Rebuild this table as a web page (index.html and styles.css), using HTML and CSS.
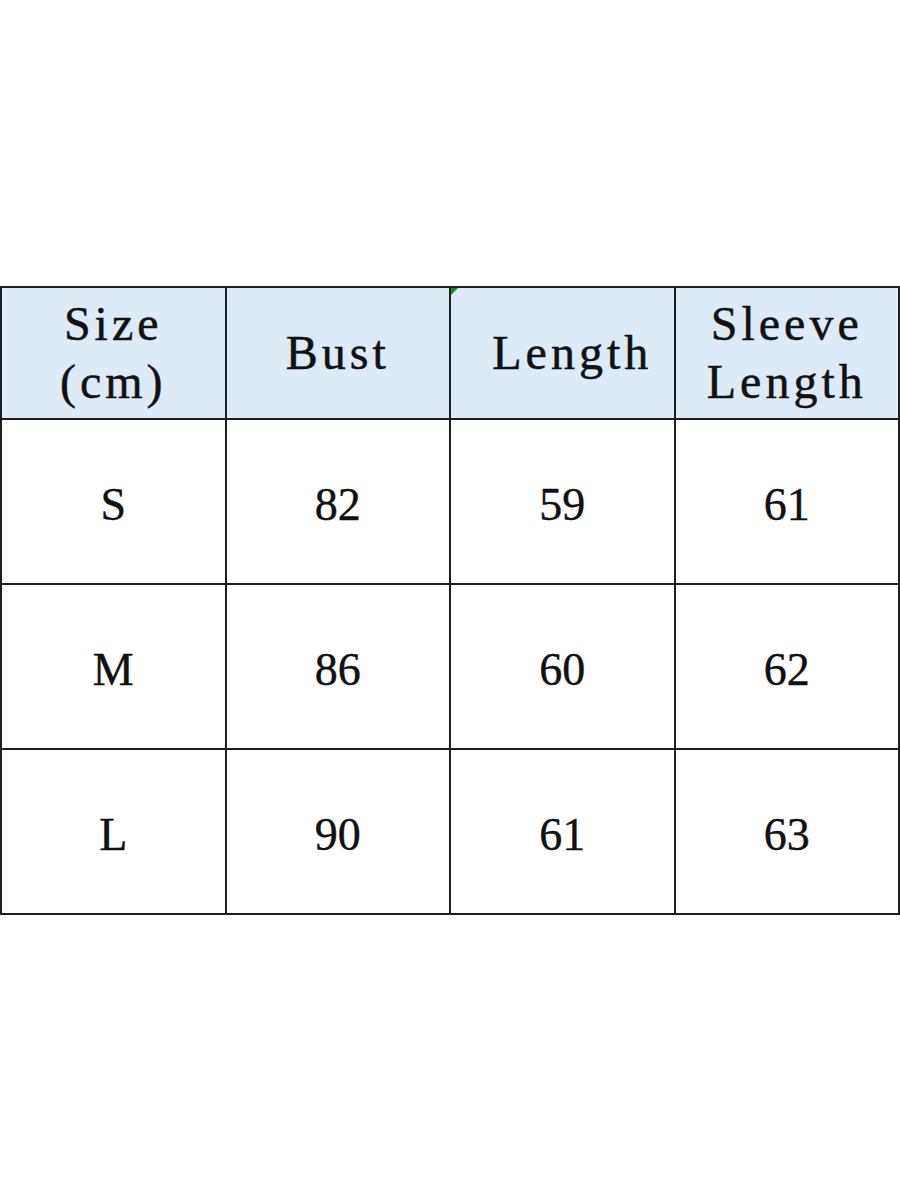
FILE: index.html
```html
<!DOCTYPE html>
<html lang="en">
<head>
<meta charset="utf-8">
<title>Size chart</title>
<link rel="stylesheet" href="styles.css">
</head>
<body>
<main class="page">
  <table class="chart">
    <thead>
      <tr class="head-row">
        <th class="head-cell">Size<br>(cm)</th>
        <th class="head-cell">Bust</th>
        <th class="head-cell head-cell--marked"><span class="shift">Length</span></th>
        <th class="head-cell">Sleeve<br>Length</th>
      </tr>
    </thead>
    <tbody>
      <tr class="body-row"><td class="cell">S</td><td class="cell">82</td><td class="cell">59</td><td class="cell">61</td></tr>
      <tr class="body-row"><td class="cell">M</td><td class="cell">86</td><td class="cell">60</td><td class="cell">62</td></tr>
      <tr class="body-row"><td class="cell">L</td><td class="cell">90</td><td class="cell">61</td><td class="cell">63</td></tr>
    </tbody>
  </table>
</main>
</body>
</html>
```

FILE: styles.css
```css
html, body {
  margin: 0;
  padding: 0;
  background: #ffffff;
}

.page {
  min-height: 1200px;
  display: flex;
  align-items: center;
  justify-content: center;
}

.chart {
  width: 900px;
  border-collapse: collapse;
  table-layout: fixed;
  font-family: "Liberation Serif", "Times New Roman", serif;
  color: #111111;
}

.head-cell,
.cell {
  border: 2px solid #1e1e1e;
  text-align: center;
  vertical-align: middle;
  padding: 0;
}

.head-cell {
  background: #ddebf7;
  height: 130px;
  font-size: 48px;
  font-weight: normal;
  line-height: 58px;
  letter-spacing: 4px;
  -webkit-text-stroke: 0.5px #111;
}

.head-cell--marked {
  position: relative;
}

.head-cell--marked::before {
  content: "";
  position: absolute;
  top: 0;
  left: 0;
  width: 0;
  height: 0;
  border-top: 7px solid #1a8a1a;
  border-right: 7px solid transparent;
}

.shift {
  display: inline-block;
  padding-left: 20px;
}

.cell {
  height: 165px;
  font-size: 46px;
  line-height: 1;
  padding-top: 8px;
  box-sizing: border-box;
  -webkit-text-stroke: 0.4px #111;
}
```
